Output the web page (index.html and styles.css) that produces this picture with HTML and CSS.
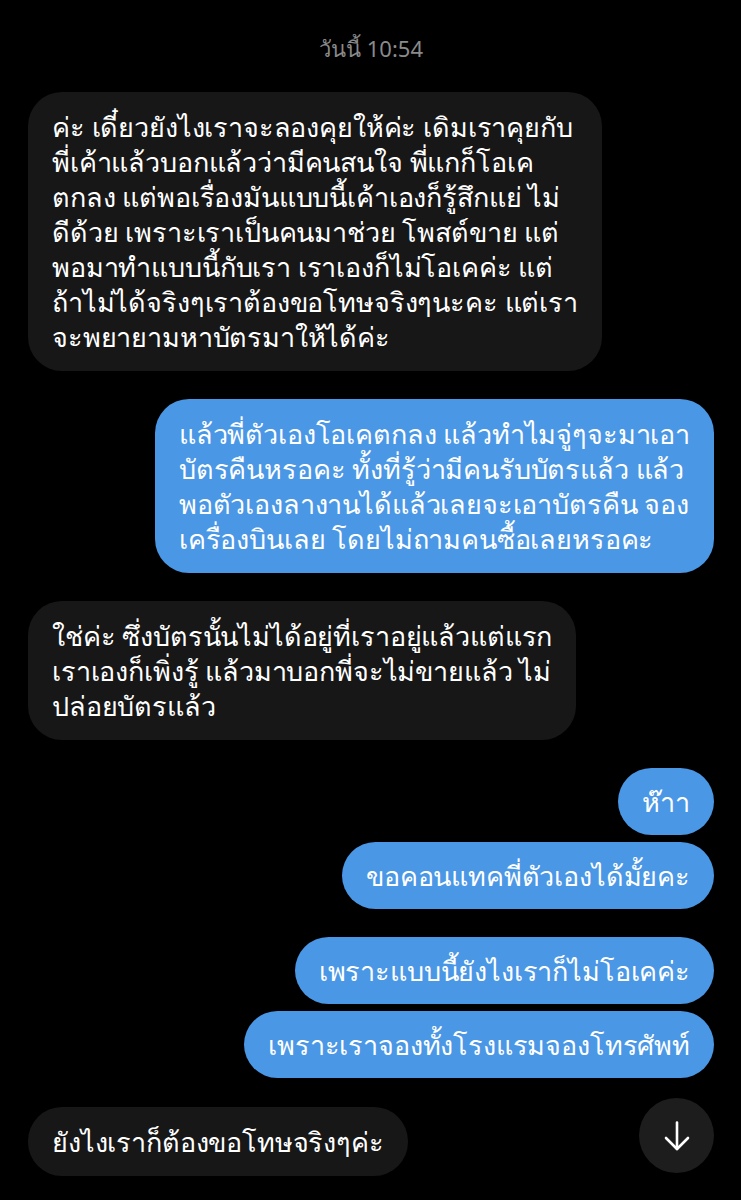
FILE: index.html
```html
<!DOCTYPE html>
<html>
<head>
<meta charset="UTF-8">
<link rel="stylesheet" href="styles.css">
</head>
<body>
<div class="chat">
	<div class="stamp">วันนี้ 10:54</div>

	<div class="msg in">ค่ะ เดี๋ยวยังไงเราจะลองคุยให้ค่ะ เดิมเราคุยกับ<br>พี่เค้าแล้วบอกแล้วว่ามีคนสนใจ พี่แกก็โอเค<br>ตกลง แต่พอเรื่องมันแบบนี้เค้าเองก็รู้สึกแย่ ไม่<br>ดีด้วย เพราะเราเป็นคนมาช่วย โพสต์ขาย แต่<br>พอมาทำแบบนี้กับเรา เราเองก็ไม่โอเคค่ะ แต่<br>ถ้าไม่ได้จริงๆเราต้องขอโทษจริงๆนะคะ แต่เรา<br>จะพยายามหาบัตรมาให้ได้ค่ะ</div>

	<div class="msg out">แล้วพี่ตัวเองโอเคตกลง แล้วทำไมจู่ๆจะมาเอา<br>บัตรคืนหรอคะ ทั้งที่รู้ว่ามีคนรับบัตรแล้ว แล้ว<br>พอตัวเองลางานได้แล้วเลยจะเอาบัตรคืน จอง<br>เครื่องบินเลย โดยไม่ถามคนซื้อเลยหรอคะ</div>

	<div class="msg in">ใช่ค่ะ ซึ่งบัตรนั้นไม่ได้อยู่ที่เราอยู่แล้วแต่แรก<br>เราเองก็เพิ่งรู้ แล้วมาบอกพี่จะไม่ขายแล้ว ไม่<br>ปล่อยบัตรแล้ว</div>

	<div class="msg out short">ห๊าา</div>
	<div class="msg out short next">ขอคอนแทคพี่ตัวเองได้มั้ยคะ</div>

	<div class="msg out short">เพราะแบบนี้ยังไงเราก็ไม่โอเคค่ะ</div>
	<div class="msg out short next">เพราะเราจองทั้งโรงแรมจองโทรศัพท์</div>

	<div class="msg in short last">ยังไงเราก็ต้องขอโทษจริงๆค่ะ</div>
</div>

<div class="scroll-down">
	<svg width="30" height="30" viewBox="0 0 30 30" fill="none" stroke="#fff" stroke-width="2.6" stroke-linecap="round" stroke-linejoin="round">
		<path d="M15 1.5 V28"/>
		<path d="M4 17 L15 28 L26 17"/>
	</svg>
</div>
</body>
</html>
```

FILE: styles.css
```css
body{
	margin:0;
	background:#000;
	color:#fff;
	font-family:"Noto Sans", "DejaVu Sans", sans-serif;
}
.chat{
	display:flex;
	flex-direction:column;
	padding:35px 27px 0 28px;
}
.stamp{
	align-self:center;
	font-size:22px;
	line-height:26px;
	color:#8a8a8a;
	margin-bottom:31px;
}
.msg{
	font-size:27px;
	letter-spacing:-0.15px;
	line-height:35px;
	padding:17px 24px;
	border-radius:34px;
	white-space:nowrap;
	margin-top:28px;
}
.stamp + .msg{
	margin-top:0;
}
.msg.short{
	padding-top:16px;
	padding-bottom:16px;
}
.msg.next{
	margin-top:7px;
}
.msg.last{
	padding-top:17px;
	padding-bottom:17px;
	margin-top:29px;
}
.in{
	align-self:flex-start;
	background:#171717;
}
.out{
	align-self:flex-end;
	background:#4a97e6;
}
.scroll-down{
	position:fixed;
	right:27px;
	bottom:27px;
	width:75px;
	height:75px;
	border-radius:50%;
	background:#1d1d1d;
	display:flex;
	align-items:center;
	justify-content:center;
}
```
